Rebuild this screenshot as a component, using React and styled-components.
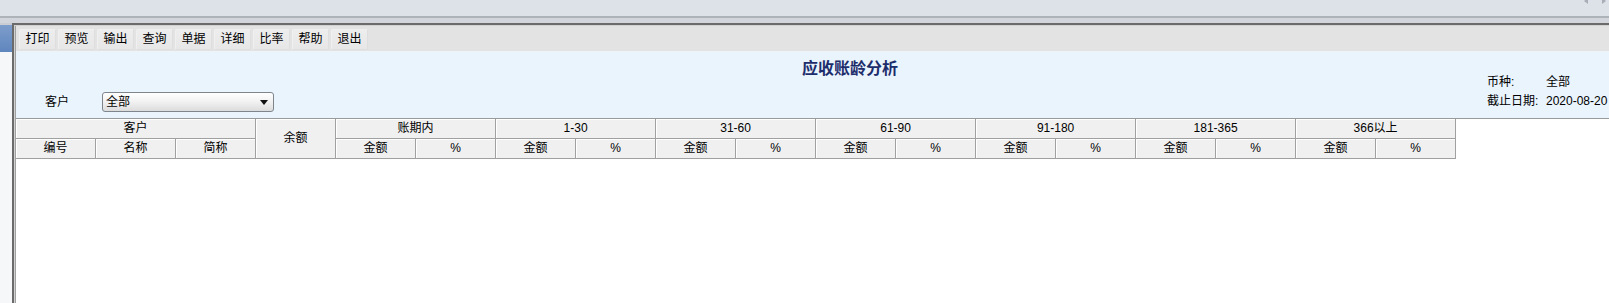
import React from "react";
import styled, { createGlobalStyle } from "styled-components";

const GlobalStyle = createGlobalStyle`
  html, body {
    margin: 0;
    padding: 0;
    overflow: hidden;
    background: #ffffff;
  }
  #root {
    width: 1609px;
    height: 303px;
  }
`;

const FONT = `"Liberation Sans", "Noto Sans CJK SC", sans-serif`;

const buttons = ["打印", "预览", "输出", "查询", "单据", "详细", "比率", "帮助", "退出"];
const ranges = ["账期内", "1-30", "31-60", "61-90", "91-180", "181-365", "366以上"];

function App() {
  return (
    <>
      <GlobalStyle />
      <StyledPage>
        <StyledTopBar>
          <StyledScrollArrows>
            <svg width="6" height="6" viewBox="0 0 6 6">
              <path d="M5 0 L1 3 L5 6 Z" fill="#a9adb5" />
            </svg>
            <svg width="6" height="6" viewBox="0 0 6 6">
              <path d="M1 0 L5 3 L1 6 Z" fill="#a9adb5" />
            </svg>
          </StyledScrollArrows>
        </StyledTopBar>
        <StyledBody>
          <StyledSideStrip />
          <StyledFrame>
            <StyledToolbar>
              {buttons.map((b) => (
                <StyledToolButton key={b}>{b}</StyledToolButton>
              ))}
            </StyledToolbar>
            <StyledHeader>
              <StyledTitle>应收账龄分析</StyledTitle>
              <StyledFilter>
                <StyledLabel>客户</StyledLabel>
                <StyledCombo>
                  <span>全部</span>
                  <svg width="8" height="5" viewBox="0 0 8 5">
                    <path d="M0 0 L8 0 L4 5 Z" fill="#111" />
                  </svg>
                </StyledCombo>
              </StyledFilter>
              <StyledInfo>
                <span>币种:</span>
                <span>全部</span>
                <span>截止日期:</span>
                <span>2020-08-20</span>
              </StyledInfo>
            </StyledHeader>
            <StyledGridArea>
              <StyledTable>
                <colgroup>
                  {Array.from({ length: 18 }).map((_, i) => (
                    <col key={i} style={{ width: 80 }} />
                  ))}
                </colgroup>
                <thead>
                  <tr>
                    <StyledCell colSpan={3}>客户</StyledCell>
                    <StyledCell rowSpan={2}>余额</StyledCell>
                    {ranges.map((r) => (
                      <StyledCell key={r} colSpan={2}>
                        {r}
                      </StyledCell>
                    ))}
                  </tr>
                  <tr>
                    <StyledCell>编号</StyledCell>
                    <StyledCell>名称</StyledCell>
                    <StyledCell>简称</StyledCell>
                    {ranges.map((r) => (
                      <React.Fragment key={r}>
                        <StyledCell>金额</StyledCell>
                        <StyledCell>%</StyledCell>
                      </React.Fragment>
                    ))}
                  </tr>
                </thead>
              </StyledTable>
            </StyledGridArea>
          </StyledFrame>
        </StyledBody>
      </StyledPage>
    </>
  );
}

const StyledPage = styled.div`
  width: 1609px;
  height: 303px;
  display: flex;
  flex-direction: column;
  font-family: ${FONT};
  font-size: 12px;
  color: #000;
`;
const StyledTopBar = styled.div`
  height: 23px;
  flex: none;
  display: flex;
  justify-content: flex-end;
  align-items: flex-start;
  background: linear-gradient(
    to bottom,
    #dde1e8 0,
    #dde1e8 16px,
    #aeb2b9 16px,
    #aeb2b9 18px,
    #d2d5db 18px,
    #d2d5db 23px
  );
`;
const StyledScrollArrows = styled.div`
  display: flex;
  gap: 12px;
  margin-top: -2px;
  padding-right: 2px;
`;
const StyledBody = styled.div`
  flex: 1;
  display: flex;
  min-height: 0;
`;
const StyledSideStrip = styled.div`
  width: 12px;
  flex: none;
  background: linear-gradient(
    to bottom,
    #c9ccd2 0,
    #c9ccd2 2px,
    #7d9dcb 2px,
    #5f86be 29px,
    #f6f7f8 29px
  );
`;
const StyledFrame = styled.div`
  flex: 1;
  display: flex;
  flex-direction: column;
  min-width: 0;
  border-top: 2px solid #6b6b6b;
  border-left: 2px solid #6b6b6b;
  padding: 1px 0 0 2px;
  box-shadow: inset 1px 1px 0 #d2d2d2, inset 2px 0 0 #a0a0a0;
`;
const StyledToolbar = styled.div`
  height: 26px;
  flex: none;
  display: flex;
  align-items: flex-start;
  gap: 2px;
  padding: 3px 0 0 3px;
  box-sizing: border-box;
  background: #e3e3e3;
  border-bottom: 1px solid #eef3f8;
`;
const StyledToolButton = styled.div`
  width: 37px;
  height: 21px;
  box-sizing: border-box;
  display: flex;
  align-items: center;
  justify-content: center;
  border: 1px solid #dedede;
  border-top-color: #f0f0f0;
  border-left-color: #f0f0f0;
  border-radius: 2px;
  background: linear-gradient(to bottom, #ededed, #e7e7e7);
  line-height: 19px;
`;
const StyledHeader = styled.div`
  flex: none;
  height: 67px;
  box-sizing: border-box;
  padding: 5px 0 6px 0;
  display: grid;
  grid-template-columns: 1fr 122px;
  grid-template-rows: 20px 15px 20px;
  background: #eaf4fd;
  border-bottom: 1px solid #9a9a9a;
`;
const StyledTitle = styled.div`
  grid-column: 1 / -1;
  grid-row: 1;
  padding-left: 75px;
  text-align: center;
  font-family: "Noto Sans CJK SC", sans-serif;
  font-size: 16px;
  font-weight: bold;
  line-height: 20px;
  color: #1d2d6b;
`;
const StyledFilter = styled.div`
  grid-column: 1;
  grid-row: 3;
  display: flex;
  align-items: center;
  padding-left: 29px;
`;
const StyledLabel = styled.span`
  width: 57px;
  line-height: 20px;
`;
const StyledCombo = styled.div`
  width: 172px;
  height: 20px;
  box-sizing: border-box;
  display: flex;
  align-items: center;
  justify-content: space-between;
  padding: 0 5px 0 3px;
  border: 1px solid #7f858c;
  border-radius: 3px;
  background: linear-gradient(to bottom, #ffffff 0%, #f3f3f3 45%, #dcdcdc 100%);
  line-height: 18px;
`;
const StyledInfo = styled.div`
  grid-column: 2;
  grid-row: 1 / -1;
  align-self: end;
  display: grid;
  grid-template-columns: 59px auto;
  line-height: 19px;
  padding-bottom: 1px;
  white-space: nowrap;
`;
const StyledGridArea = styled.div`
  flex: 1;
  background: #ffffff;
`;
const StyledTable = styled.table`
  table-layout: fixed;
  width: 1440px;
  border-collapse: separate;
  border-spacing: 0;
`;
const StyledCell = styled.th`
  padding: 0;
  font-weight: normal;
  line-height: 19px;
  text-align: center;
  background: #f0f0f0;
  border-right: 1px solid #a0a0a0;
  border-bottom: 1px solid #a0a0a0;
  box-shadow: inset 1px 1px 0 #ffffff;
  white-space: nowrap;
`;

export default App;
